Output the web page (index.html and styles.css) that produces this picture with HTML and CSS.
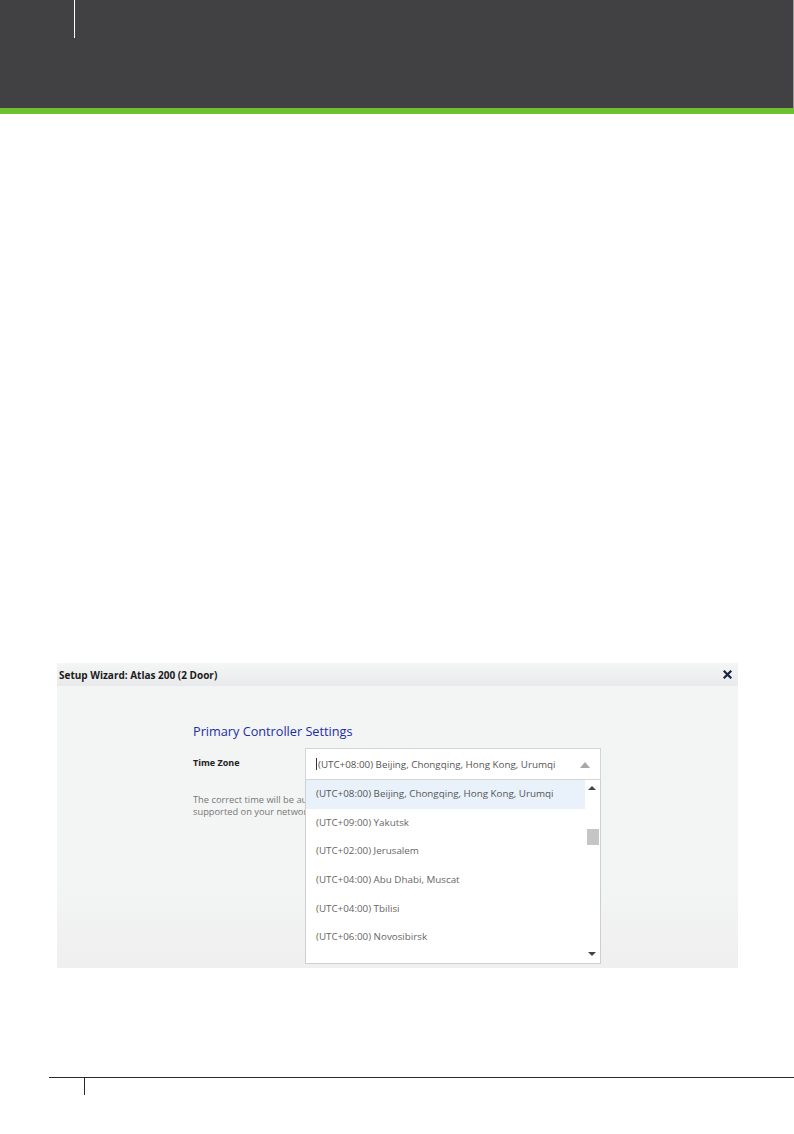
FILE: index.html
```html
<!DOCTYPE html>
<html lang="en">
<head>
  <meta charset="UTF-8">
  <title>Setup Wizard - Time Zone</title>
  <link rel="stylesheet" href="styles.css">
</head>
<body>

  <header class="page-header">
    <div class="tab-mark"></div>
  </header>
  <div class="green-stripe"></div>

  <div class="page-body">
    <div class="shot">
      <div class="shot-title">
        <span>Setup Wizard: Atlas 200 (2 Door)</span>
        <svg class="close-x" width="9" height="9" viewBox="0 0 9 9">
          <path d="M1.5 1.5 L7.5 7.5 M7.5 1.5 L1.5 7.5" stroke="#1c2147" stroke-width="2.2" stroke-linecap="square"/>
        </svg>
      </div>

      <div class="shot-content">
        <h2 class="section-title">Primary Controller Settings</h2>

        <div class="field-row">
          <div class="field-label">Time Zone</div>
          <div class="select-wrap">
            <div class="select-box">
              <span class="caret"></span>(UTC+08:00) Beijing, Chongqing, Hong Kong, Urumqi
              <span class="arrow-up"></span>
            </div>

            <div class="dropdown">
              <ul class="options">
                <li class="active">(UTC+08:00) Beijing, Chongqing, Hong Kong, Urumqi</li>
                <li>(UTC+09:00) Yakutsk</li>
                <li>(UTC+02:00) Jerusalem</li>
                <li>(UTC+04:00) Abu Dhabi, Muscat</li>
                <li>(UTC+04:00) Tbilisi</li>
                <li>(UTC+06:00) Novosibirsk</li>
              </ul>
              <div class="scrollbar">
                <span class="sb-up"></span>
                <span class="sb-thumb"></span>
                <span class="sb-down"></span>
              </div>
            </div>
          </div>
        </div>

        <!-- the open list covers the rest of this text -->
        <div class="hint-clip">
          <p class="hint">The correct time will be automatically set if NTP is</p>
          <p class="hint">supported on your network.</p>
        </div>
      </div>
    </div>
  </div>

  <footer class="page-footer">
    <div class="footer-tick"></div>
  </footer>

</body>
</html>
```

FILE: styles.css
```css
:root {
  --dark: #414042;
  --green: #6cc131;
  --panel: #f3f4f4;
  --navy: #1c2ea6;
}

* {
  margin: 0;
  padding: 0;
  box-sizing: border-box;
}

body {
  width: 794px;
  height: 1134px;
  background: #ffffff;
  font-family: "Open Sans", "Noto Sans", sans-serif;
  display: flex;
  flex-direction: column;
}

.page-header {
  height: 108px;
  background: var(--dark);
  border-right: 1px solid #9a9a9a;
  padding-left: 74px;
}

.tab-mark {
  width: 1px;
  height: 38px;
  background: #ffffff;
}

.green-stripe {
  height: 6px;
  background: var(--green);
}

.page-body {
  flex: 1;
  padding: 549px 0 0 57px;
}

.shot {
  width: 681px;
  height: 305px;
  background: var(--panel);
  display: flex;
  flex-direction: column;
}

.shot-title {
  height: 23px;
  display: flex;
  align-items: center;
  justify-content: space-between;
  padding: 0 6px 0 2px;
  background: linear-gradient(#f4f5f5, #e9eaeb);
  font-size: 10px;
  font-weight: 700;
  color: #1b1b1b;
}

.close-x {
  display: block;
}

.shot-content {
  padding: 37px 0 0 136px;
  background: linear-gradient(var(--panel) 70%, #efefef);
  flex: 1;
}

.section-title {
  font-size: 12.7px;
  font-weight: 400;
  color: var(--navy);
  line-height: 16px;
}

.field-row {
  display: flex;
  margin-top: 9px;
}

.field-label {
  width: 112px;
  font-size: 9px;
  font-weight: 700;
  color: #222;
  padding-top: 8px;
}

.select-wrap {
  position: relative;
  width: 296px;
}

.select-box {
  height: 32px;
  background: #ffffff;
  border: 1px solid #d4d4d4;
  font-size: 9.8px;
  color: #555;
  display: flex;
  align-items: center;
  padding-left: 10px;
  position: relative;
}

.caret {
  display: inline-block;
  width: 1px;
  height: 12px;
  background: #333;
  margin-right: 1px;
}

.arrow-up {
  position: absolute;
  right: 10px;
  top: 13px;
  border-left: 5px solid transparent;
  border-right: 5px solid transparent;
  border-bottom: 6px solid #a7a7a7;
}

.dropdown {
  position: absolute;
  left: 0;
  top: 32px;
  width: 296px;
  height: 184px;
  background: #ffffff;
  border: 1px solid #cfcfcf;
  border-top: none;
  display: flex;
  z-index: 2;
}

.options {
  list-style: none;
  flex: 1;
  font-size: 9.8px;
  color: #666;
}

.options li {
  height: 28.7px;
  line-height: 28.7px;
  padding-left: 10px;
  white-space: nowrap;
}

.options li.active {
  background: #e9f2fb;
  color: #555;
}

.scrollbar {
  width: 15px;
  position: relative;
  background: #ffffff;
}

.sb-up {
  position: absolute;
  top: 6px;
  left: 3px;
  border-left: 4px solid transparent;
  border-right: 4px solid transparent;
  border-bottom: 4px solid #444;
}

.sb-thumb {
  position: absolute;
  top: 49px;
  left: 2px;
  width: 12px;
  height: 16px;
  background: #c5c5c5;
}

.sb-down {
  position: absolute;
  bottom: 7px;
  left: 3px;
  border-left: 4px solid transparent;
  border-right: 4px solid transparent;
  border-top: 4px solid #444;
}

.hint-clip {
  width: 112px;
  overflow: hidden;
  margin-top: 14px;
}

.hint {
  font-size: 9.3px;
  line-height: 12px;
  color: #777;
  white-space: nowrap;
}

.page-footer {
  height: 57px;
  margin-left: 49px;
  border-top: 1px solid #2a2a2a;
  padding-left: 35px;
}

.footer-tick {
  width: 1px;
  height: 17px;
  background: #2a2a2a;
}
```
